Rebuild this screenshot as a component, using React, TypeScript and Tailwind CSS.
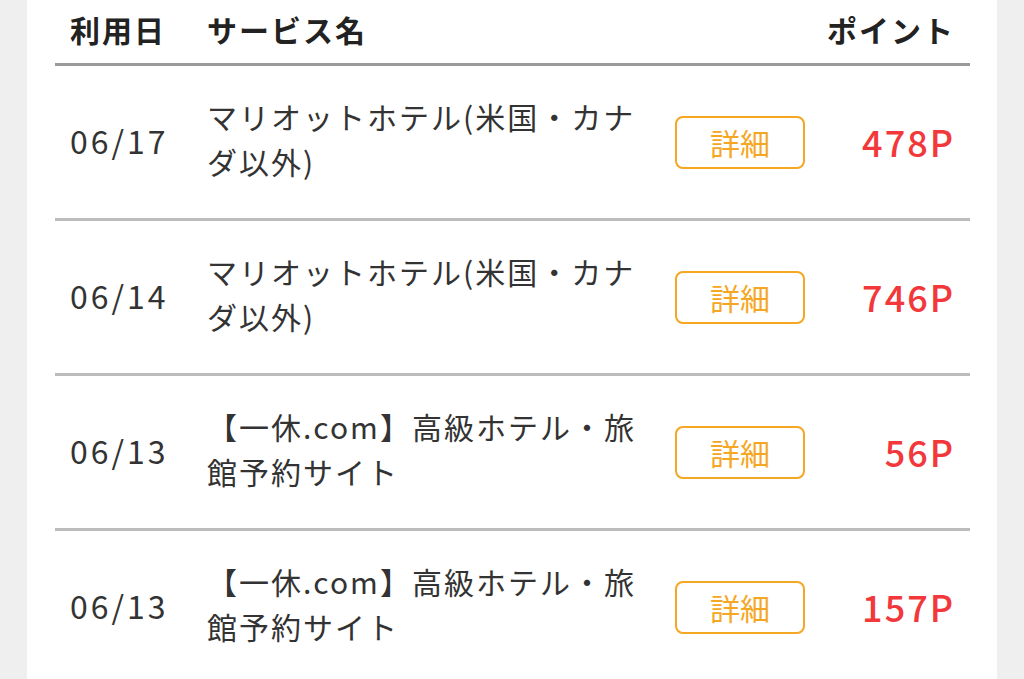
import React from 'react';

const ROWS = [
  { date: '06/17', lines: ['マリオットホテル(米国・カナ', 'ダ以外)'], point: '478P' },
  { date: '06/14', lines: ['マリオットホテル(米国・カナ', 'ダ以外)'], point: '746P' },
  { date: '06/13', lines: ['【一休.com】高級ホテル・旅', '館予約サイト'], point: '56P' },
  { date: '06/13', lines: ['【一休.com】高級ホテル・旅', '館予約サイト'], point: '157P' },
];

export default function App() {
  return (
    <div className="min-h-screen bg-[#efefef] px-[27px] [font-family:'Noto_Sans_CJK_JP','Noto_Sans',sans-serif]">
      <div className="bg-white h-[679px] overflow-hidden pl-[28px] pr-[27px]">
        {/* header */}
        <div className="h-[66px] border-b-[3px] border-[#9a9a9a] flex items-center pl-[15px] pr-[17px] text-[30px] font-bold text-[#222] tracking-[2px] pb-[4px]">
          <div className="w-[137px]">利用日</div>
          <div className="flex-1">サービス名</div>
          <div className="-mr-[2px]">ポイント</div>
        </div>

        {ROWS.map((r, i) => (
          <div key={i} className="h-[155px] border-b-[3px] border-[#bcbcbc] flex items-center pl-[15px] pr-[17px]">
            <div className="w-[137px] text-[32px] text-[#333] tracking-[3px] pb-[4px]">{r.date}</div>
            <div className="w-[468px] text-[30px] leading-[45px] text-[#333] tracking-[2px] pb-[6px]">
              {r.lines.map((l, j) => (
                <div key={j} className="whitespace-nowrap">{l}</div>
              ))}
            </div>
            <button className="w-[130px] h-[53px] border-2 border-[#f5a623] rounded-[8px] text-[#f5a623] text-[30px] flex items-center justify-center">
              詳細
            </button>
            <div className="flex-1 text-right text-[36px] font-medium text-[#f2383a] tracking-[2px] -mr-[2px] pb-[2px]">
              {r.point}
            </div>
          </div>
        ))}
      </div>
    </div>
  );
}
